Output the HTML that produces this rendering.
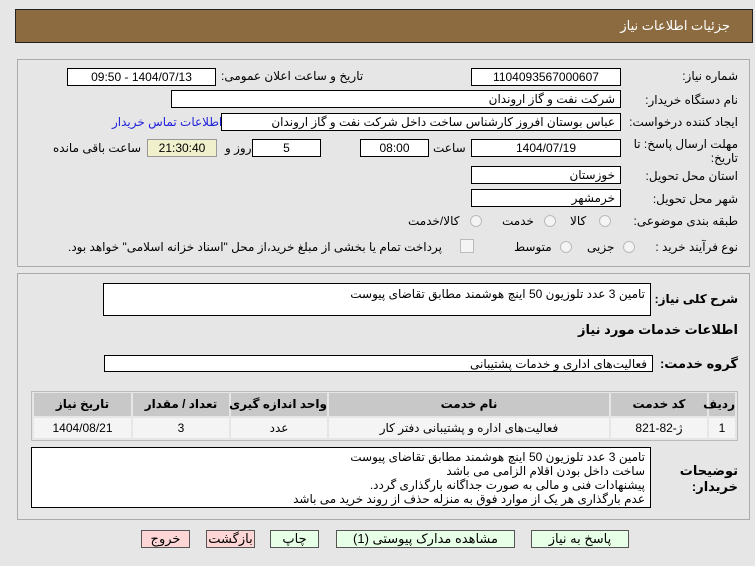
<!DOCTYPE html>
<html><head><meta charset="utf-8"><style>
body{margin:0;width:755px;height:566px;background:#e6e6e6;font-family:"Liberation Sans","DejaVu Sans",sans-serif;font-size:12px;color:#000;position:relative;overflow:hidden;direction:rtl}
.a{position:absolute;white-space:nowrap}
.b{position:absolute;background:#fff;border:1px solid #000;box-sizing:border-box;white-space:nowrap;overflow:hidden;line-height:16px}
.c{text-align:center}
.r{text-align:right;padding-right:5px}
.lb{font-weight:bold}
.rad{position:absolute;width:12px;height:12px;border-radius:50%;border:1px solid #bbb;background:#f4f4f4;box-sizing:border-box}
.btn{position:absolute;height:18px;border:1px solid #555;box-sizing:border-box;text-align:center;line-height:16px;font-size:13px}
</style></head><body>
<div class="a" style="left:15px;top:9px;width:738px;height:34px;background:#8c6b40;border:1px solid #222;box-sizing:border-box"></div>
<div class="a" style="right:25px;top:18px;color:#fff;font-size:13px">جزئیات اطلاعات نیاز</div>

<div class="a" style="left:17px;top:59px;width:733px;height:208px;border:1px solid #aaa;box-sizing:border-box"></div>
<div class="a" style="left:17px;top:273px;width:733px;height:247px;border:1px solid #aaa;box-sizing:border-box"></div>

<div class="a" style="right:17px;top:69px">شماره نیاز:</div>
<div class="b c" style="left:471px;top:68px;width:150px;height:18px">1104093567000607</div>
<div class="a" style="left:221px;top:69px">تاریخ و ساعت اعلان عمومی:</div>
<div class="b c" style="left:67px;top:68px;width:149px;height:18px">1404/07/13 - 09:50</div>

<div class="a" style="right:17px;top:93px">نام دستگاه خریدار:</div>
<div class="b r" style="left:171px;top:90px;width:450px;height:18px">شرکت نفت و گاز اروندان</div>

<div class="a" style="right:17px;top:115px">ایجاد کننده درخواست:</div>
<div class="b r" style="left:221px;top:113px;width:400px;height:18px">عباس بوستان افروز کارشناس ساخت داخل شرکت نفت و گاز اروندان</div>
<div class="a" style="left:112px;top:115px;color:#2222dd">اطلاعات تماس خریدار</div>

<div class="a" style="right:17px;top:137px;line-height:14px;text-align:right">مهلت ارسال پاسخ: تا<br>تاریخ:</div>
<div class="b c" style="left:471px;top:139px;width:150px;height:18px">1404/07/19</div>
<div class="a" style="left:433px;top:141px">ساعت</div>
<div class="b c" style="left:360px;top:139px;width:69px;height:18px">08:00</div>
<div class="b c" style="left:252px;top:139px;width:69px;height:18px">5</div>
<div class="a" style="left:225px;top:141px">روز و</div>
<div class="b c" style="left:147px;top:139px;width:70px;height:18px;background:#f0f0cc;border-color:#999">21:30:40</div>
<div class="a" style="left:53px;top:141px">ساعت باقی مانده</div>

<div class="a" style="right:17px;top:169px">استان محل تحویل:</div>
<div class="b r" style="left:471px;top:166px;width:150px;height:18px">خوزستان</div>
<div class="a" style="right:17px;top:192px">شهر محل تحویل:</div>
<div class="b r" style="left:471px;top:189px;width:150px;height:18px">خرمشهر</div>

<div class="a" style="right:17px;top:214px">طبقه بندی موضوعی:</div>
<div class="rad" style="left:599px;top:215px"></div><div class="a" style="left:570px;top:214px">کالا</div>
<div class="rad" style="left:544px;top:215px"></div><div class="a" style="left:502px;top:214px">خدمت</div>
<div class="rad" style="left:470px;top:215px"></div><div class="a" style="left:408px;top:214px">کالا/خدمت</div>

<div class="a" style="right:17px;top:240px">نوع فرآیند خرید :</div>
<div class="rad" style="left:623px;top:241px"></div><div class="a" style="left:587px;top:240px">جزیی</div>
<div class="rad" style="left:560px;top:241px"></div><div class="a" style="left:514px;top:240px">متوسط</div>
<div class="a" style="left:460px;top:239px;width:12px;height:12px;border:1px solid #bbb;background:#f4f4f4"></div>
<div class="a" style="left:68px;top:240px">پرداخت تمام یا بخشی از مبلغ خرید،از محل "اسناد خزانه اسلامی" خواهد بود.</div>

<div class="a lb" style="right:17px;top:292px;font-size:12px">شرح کلی نیاز:</div>
<div class="b r" style="left:103px;top:283px;width:548px;height:33px;line-height:20px">تامین 3 عدد تلوزیون 50 اینچ هوشمند مطابق تقاضای پیوست</div>
<div class="a lb" style="right:17px;top:322px;font-size:13px">اطلاعات خدمات مورد نیاز</div>
<div class="a lb" style="right:17px;top:356px;font-size:13px">گروه خدمت:</div>
<div class="b r" style="left:104px;top:355px;width:549px;height:17px">فعالیت‌های اداری و خدمات پشتیبانی</div>

<div class="a" style="left:31px;top:391px;width:707px;height:50px;border:1px solid #bbb;box-sizing:border-box"></div>
<div class="a lb c" style="left:34px;top:393px;width:97px;height:23px;background:#c8c8c8;line-height:23px;font-size:12px">تاریخ نیاز</div>
<div class="a lb c" style="left:133px;top:393px;width:96px;height:23px;background:#c8c8c8;line-height:23px;font-size:12px">تعداد / مقدار</div>
<div class="a lb c" style="left:231px;top:393px;width:96px;height:23px;background:#c8c8c8;line-height:23px;font-size:12px">واحد اندازه گیری</div>
<div class="a lb c" style="left:329px;top:393px;width:280px;height:23px;background:#c8c8c8;line-height:23px;font-size:12px">نام خدمت</div>
<div class="a lb c" style="left:611px;top:393px;width:96px;height:23px;background:#c8c8c8;line-height:23px;font-size:12px">کد خدمت</div>
<div class="a lb c" style="left:709px;top:393px;width:26px;height:23px;background:#c8c8c8;line-height:23px;font-size:12px">ردیف</div>
<div class="a c" style="left:34px;top:418px;width:97px;height:20px;background:#f4f4f4;line-height:20px">1404/08/21</div>
<div class="a c" style="left:133px;top:418px;width:96px;height:20px;background:#f4f4f4;line-height:20px">3</div>
<div class="a c" style="left:231px;top:418px;width:96px;height:20px;background:#f4f4f4;line-height:20px">عدد</div>
<div class="a c" style="left:329px;top:418px;width:280px;height:20px;background:#f4f4f4;line-height:20px">فعالیت‌های اداره و پشتیبانی دفتر کار</div>
<div class="a c" style="left:611px;top:418px;width:96px;height:20px;background:#f4f4f4;line-height:20px">ژ-82-821</div>
<div class="a c" style="left:709px;top:418px;width:26px;height:20px;background:#f4f4f4;line-height:20px">1</div>

<div class="a lb" style="right:17px;top:463px;font-size:13px;line-height:16px;text-align:right">توضیحات<br>خریدار:</div>
<div class="b r" style="left:31px;top:447px;width:620px;height:61px;line-height:14px;white-space:normal;padding-top:2px">تامین 3 عدد تلوزیون 50 اینچ هوشمند مطابق تقاضای پیوست<br>ساخت داخل بودن اقلام الزامی می باشد<br>پیشنهادات فنی و مالی به صورت جداگانه بارگذاری گردد.<br>عدم بارگذاری هر یک از موارد فوق به منزله حذف از روند خرید می باشد</div>

<div class="btn" style="left:531px;top:530px;width:98px;background:#e6ffe6">پاسخ به نیاز</div>
<div class="btn" style="left:336px;top:530px;width:179px;background:#e6ffe6">مشاهده مدارک پیوستی (1)</div>
<div class="btn" style="left:270px;top:530px;width:49px;background:#e6ffe6">چاپ</div>
<div class="btn" style="left:206px;top:530px;width:49px;background:#ffd6d6">بازگشت</div>
<div class="btn" style="left:141px;top:530px;width:49px;background:#ffd6d6">خروج</div>
</body></html>
